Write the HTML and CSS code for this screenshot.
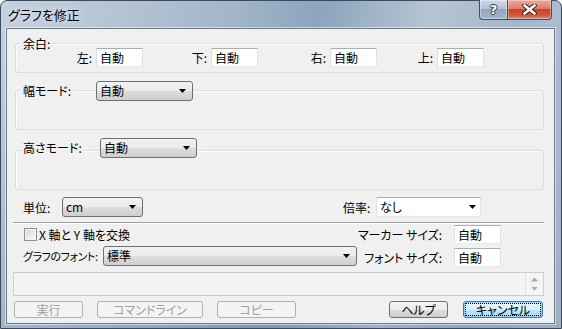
FILE: index.html
```html
<!DOCTYPE html>
<html lang="ja">
  <head>
    <meta charset="UTF-8" />
    <title>グラフを修正</title>
    <link rel="stylesheet" href="styles.css">
  </head>
  <body>
    <div class="window">
      <div class="titlebar">
        <span class="title">グラフを修正</span>
        <div class="caption-buttons">
          <span class="caption-btn help-btn">?</span>
          <span class="caption-btn close-btn">
            <svg width="15" height="11" viewBox="0 0 15 11">
              <path d="M2.5 1.5l10 8M12.5 1.5l-10 8" stroke="#3a2420" stroke-width="4.4" stroke-linecap="square" fill="none"/>
              <path d="M2.5 1.5l10 8M12.5 1.5l-10 8" stroke="#fff" stroke-width="2.4" stroke-linecap="square" fill="none"/>
            </svg>
          </span>
        </div>
      </div>

      <div class="client">
        <!-- margins -->
        <div class="group group-margins">
          <div class="group-head head-margins"><span class="cap">余白:</span></div>
          <div class="margin-row">
            <div class="mfield mf-left"><span class="lbl">左:</span><span class="edit">自動</span></div>
            <div class="mfield mf-bottom"><span class="lbl">下:</span><span class="edit">自動</span></div>
            <div class="mfield mf-right"><span class="lbl">右:</span><span class="edit">自動</span></div>
            <div class="mfield mf-top"><span class="lbl">上:</span><span class="edit">自動</span></div>
          </div>
        </div>

        <!-- width / height modes -->
        <div class="group group-mode group-width">
          <div class="group-head head-width">
            <span class="cap-slot slot-width"><span class="cap">幅モード:</span></span>
            <span class="combo combo-mode">自動</span>
          </div>
        </div>

        <div class="group group-mode group-height">
          <div class="group-head head-height">
            <span class="cap-slot slot-height"><span class="cap">高さモード:</span></span>
            <span class="combo combo-mode">自動</span>
          </div>
        </div>

        <div class="unit-row">
          <span class="slot slot-unit">単位:</span>
          <span class="combo combo-unit">cm</span>
          <span class="slot slot-scale">倍率:</span>
          <span class="combo combo-edit combo-scale">なし</span>
        </div>

        <div class="separator"></div>

        <div class="lower">
          <div class="lower-left">
            <div class="check-row"><span class="checkbox"></span>X 軸と Y 軸を交換</div>
            <div class="font-row">
              <span class="slot slot-font">グラフのフォント:</span>
              <span class="combo combo-font">標準</span>
            </div>
          </div>
          <div class="lower-right">
            <div class="size-row"><span class="lbl">マーカー サイズ:</span><span class="edit">自動</span></div>
            <div class="size-row"><span class="lbl">フォント サイズ:</span><span class="edit">自動</span></div>
          </div>
        </div>

        <div class="status">
          <div class="status-text"></div>
          <div class="status-scroll"><span class="arrow-up"></span><span class="arrow-down"></span></div>
        </div>

        <div class="button-row">
          <span class="btn btn-disabled btn-run">実行</span>
          <span class="btn btn-disabled btn-cmd">コマンドライン</span>
          <span class="btn btn-disabled btn-copy">コピー</span>
          <span class="btn btn-help">ヘルプ</span>
          <span class="btn btn-default btn-cancel">キャンセル</span>
        </div>
      </div>
    </div>
  </body>
</html>
```

FILE: styles.css
```css
* {
  margin: 0;
  padding: 0;
  box-sizing: border-box;
}

body {
  width: 562px;
  height: 329px;
  overflow: hidden;
  background: #fff;
  color: #000;
  font-family: "Noto Sans CJK JP", "Noto Sans", sans-serif;
  font-size: 12px;
  font-feature-settings: "palt";
}

.window {
  width: 562px;
  height: 329px;
  display: flex;
  flex-direction: column;
  border: 1px solid #3b4a5c;
  border-radius: 7px 7px 0 0;
  background:
    linear-gradient(to bottom, rgba(60, 85, 115, 0) 28px, rgba(60, 85, 115, 0.18) 100%),
    linear-gradient(100deg, #c4d1de 0%, #b6c5d5 18%, #a2b5c9 38%, #8ca4bd 52%, #9fb3c8 60%, #b6c4d3 70%, #a5b7ca 84%, #b4c3d2 100%);
}

/* title bar */
.titlebar {
  height: 27px;
  display: flex;
  justify-content: space-between;
  align-items: flex-start;
}

.title {
  padding: 5px 0 0 7px;
  font-size: 13px;
  line-height: 17px;
  text-shadow: 0 0 6px rgba(255, 255, 255, 0.9);
}

.caption-buttons {
  display: flex;
  margin: -1px 9px 0 0;
}

.caption-btn {
  height: 20px;
  display: flex;
  align-items: center;
  justify-content: center;
  border: 1px solid #3f4f66;
  border-top: none;
  box-shadow: inset 0 0 0 1px rgba(255, 255, 255, 0.35);
}

.help-btn {
  width: 28px;
  border-right: none;
  border-radius: 0 0 0 4px;
  background: linear-gradient(#d0dae5 0%, #b3c3d4 45%, #91a7bf 50%, #a4b8cc 100%);
  color: #fff;
  font-family: "DejaVu Sans", sans-serif;
  font-weight: bold;
  font-size: 13px;
  text-shadow: 1px 0 0 #2c3a4c, -1px 0 0 #2c3a4c, 0 1px 0 #2c3a4c, 0 -1px 0 #2c3a4c;
}

.close-btn {
  width: 45px;
  border-radius: 0 0 4px 0;
  background: linear-gradient(#e9ab9e 0%, #d9806a 45%, #c4442c 50%, #cf5638 80%, #e08d6a 100%);
}

/* client area */
.client {
  height: 296px;
  margin: 0 6px 0 5px;
  padding: 14px 10px 0 6px;
  background: #f0f0f0;
  border: 1px solid #6a7b8f;
  box-shadow: 0 0 0 1px rgba(255, 255, 255, 0.5);
}

.group {
  margin-left: 2px;
  border: 1px solid #d5dfe5;
  border-radius: 3px;
  box-shadow: inset 1px 1px 0 #fff;
}

.group-head {
  display: flex;
  align-items: center;
  padding-left: 5px;
}

.cap {
  background: #f0f0f0;
  padding: 0 2px;
  line-height: 14px;
  white-space: nowrap;
}

.cap-slot {
  display: flex;
}

.group-margins {
  height: 30px;
}

.head-margins {
  height: 14px;
  margin-top: -7px;
}

.margin-row {
  display: flex;
  height: 19px;
  margin-top: -3px;
}

.mfield {
  display: flex;
  justify-content: flex-end;
  align-items: center;
}

.mf-left { width: 127px; }
.mf-bottom { width: 115px; }
.mf-right { width: 119px; }
.mf-top { width: 107px; }

.lbl {
  margin-right: 4px;
  white-space: nowrap;
}

.edit {
  width: 47px;
  height: 19px;
  padding-left: 3px;
  line-height: 17px;
  background: #fff;
  border: 1px solid;
  border-color: #abadb3 #e2e3ea #e3e9ef #dbdfe6;
}

.group-mode {
  height: 40px;
}

.group-width {
  margin-top: 17px;
}

.group-height {
  margin-top: 20px;
}

.head-width {
  height: 20px;
  margin-top: -10px;
}

.head-height {
  height: 20px;
  margin-top: -13px;
}

.slot-width { width: 75px; }
.slot-height { width: 79px; }

/* drop-down lists */
.combo {
  height: 20px;
  flex-shrink: 0;
  display: flex;
  align-items: center;
  justify-content: space-between;
  padding: 0 6px 0 3px;
  line-height: 18px;
  border: 1px solid #707070;
  border-radius: 3px;
  background: linear-gradient(#f2f2f2 0%, #ebebeb 50%, #dddddd 50%, #cfcfcf 100%);
}

.combo::after {
  content: "";
  width: 7px;
  height: 4px;
  background: #000;
  clip-path: polygon(0 0, 100% 0, 50% 100%);
}

.combo-edit {
  padding-right: 4px;
  border-radius: 0;
  background: #fff;
  border-color: #abadb3 #e2e3ea #e3e9ef #dbdfe6;
}

.combo-mode { width: 97px; }

.unit-row {
  display: flex;
  align-items: center;
  height: 20px;
  margin-top: 7px;
  padding-left: 10px;
}

.slot {
  flex-shrink: 0;
  white-space: nowrap;
}

.slot-unit { width: 39px; }
.combo-unit { width: 81px; }
.slot-scale { width: 33px; margin-left: 200px; }
.combo-scale { width: 105px; }

.separator {
  height: 2px;
  margin-top: 5px;
  border-top: 1px solid #a0a0a0;
  border-bottom: 1px solid #fff;
}

.lower {
  display: flex;
  height: 43px;
}

.lower-left {
  padding-left: 10px;
}

.check-row {
  display: flex;
  align-items: center;
  height: 14px;
  margin-top: 3px;
  white-space: nowrap;
}

.checkbox {
  width: 13px;
  height: 13px;
  margin: 0 2px 0 1px;
  border: 1px solid #8e8f8f;
  background: linear-gradient(135deg, #d6d6d6, #f8f8f8);
  box-shadow: inset 0 0 0 1px #f4f4f4;
}

.font-row {
  display: flex;
  align-items: center;
  height: 20px;
  margin-top: 5px;
}

.slot-font {
  width: 80px;
  font-size: 11px;
  letter-spacing: -0.4px;
}

.combo-font { width: 254px; }

.lower-right {
  margin: 0 43px 0 auto;
}

.size-row {
  display: flex;
  justify-content: flex-end;
  align-items: center;
  height: 19px;
  margin-top: 4px;
}

.size-row:first-child {
  margin-top: 1px;
}

.size-row .lbl {
  margin-right: 12px;
}

/* message box */
.status {
  display: flex;
  height: 24px;
  margin-top: 5px;
  border: 1px solid #cdcdcd;
  background: #f4f4f4;
}

.status-text {
  flex: 1;
}

.status-scroll {
  width: 18px;
  display: flex;
  flex-direction: column;
  align-items: center;
  justify-content: center;
  gap: 5px;
  border-left: 1px solid #e2e2e2;
}

.arrow-up,
.arrow-down {
  width: 7px;
  height: 4px;
  background: #a8a8a8;
}

.arrow-up {
  clip-path: polygon(50% 0, 100% 100%, 0 100%);
}

.arrow-down {
  clip-path: polygon(0 0, 100% 0, 50% 100%);
}

/* buttons */
.button-row {
  display: flex;
  height: 17px;
  margin-top: 5px;
  padding-left: 1px;
}

.btn {
  height: 17px;
  flex-shrink: 0;
  display: flex;
  align-items: center;
  justify-content: center;
  line-height: 15px;
  white-space: nowrap;
  border: 1px solid #707070;
  border-radius: 3px;
  background: linear-gradient(#f2f2f2 0%, #ebebeb 50%, #dddddd 50%, #cfcfcf 100%);
}

.btn-disabled {
  color: #a0a0a0;
  border-color: #adb2b5;
  background: #f4f4f4;
}

.btn-run { width: 69px; }
.btn-cmd { width: 106px; margin-left: 14px; }
.btn-copy { width: 79px; margin-left: 14px; }
.btn-help { width: 59px; margin-left: auto; }
.btn-cancel { width: 80px; margin: 0 1px 0 15px; }

.btn-default {
  border-color: #3c7fb1;
  background: linear-gradient(#eaf6fd 0%, #d9f0fc 50%, #bee6fd 50%, #a7d9f5 100%);
  box-shadow: inset 0 0 0 1px #8fd2f5;
  outline: 1px dotted #000;
  outline-offset: -3px;
}
```
